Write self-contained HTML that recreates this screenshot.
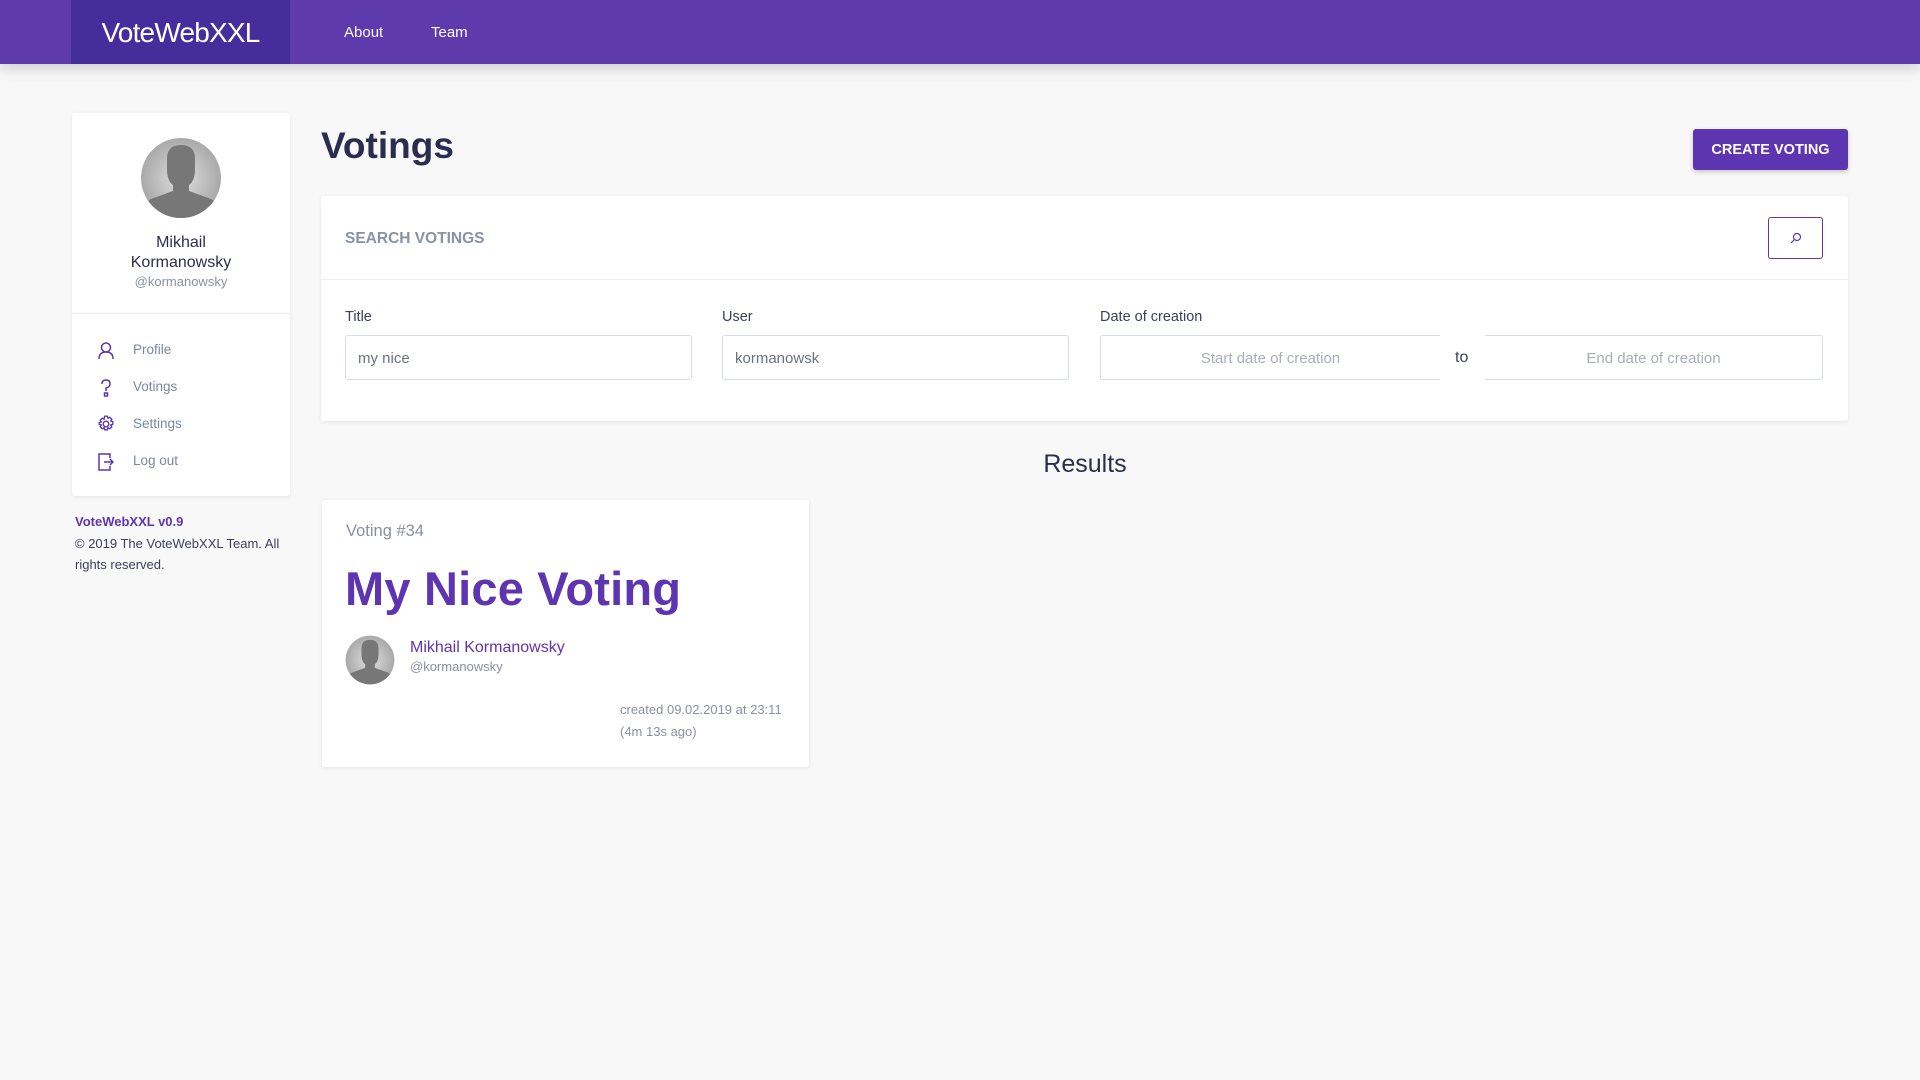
<!DOCTYPE html>
<html><head><meta charset="utf-8"><style>
*{box-sizing:border-box;margin:0;padding:0}
body{width:1920px;height:1080px;background:#f8f8f8;font-family:"Liberation Sans",sans-serif;position:relative;overflow:hidden;color:#2b2d50}
.a{position:absolute;white-space:nowrap}
.nav{position:absolute;left:0;top:0;width:1920px;height:64px;background:#5e3aad;box-shadow:0 4px 14px rgba(0,0,0,.18)}
.brand{position:absolute;left:71px;top:0;width:219px;height:64px;background:#452d9c;color:#fff;font-size:28px;line-height:66px;text-align:center;letter-spacing:-0.8px}
.card{position:absolute;background:#fff;border-radius:3px;box-shadow:0 1px 4px rgba(0,0,0,.08)}
.inp{position:absolute;height:45px;border:1px solid #d6dde6;border-radius:3px;background:#fff;font-size:15px;line-height:45px;color:#6b7186}
.lbl{font-size:14.5px;color:#3d4058}
.mi{font-size:13.5px;color:#7b86a0}
</style></head><body>
<div class="nav"><div class="brand">VoteWebXXL</div>
<div class="a" style="left:344px;top:24px;color:#fff;font-size:15px">About</div>
<div class="a" style="left:431px;top:24px;color:#fff;font-size:15px">Team</div></div>

<div class="card" style="left:72px;top:113px;width:218px;height:383px">
<svg style="position:absolute;left:68px;top:24px" width="82" height="82" viewBox="0 0 82 82"><defs><radialGradient id="g" cx=".5" cy=".5" r=".5"><stop offset="0" stop-color="#e0e0e0"/><stop offset="1" stop-color="#a9a9a9"/></radialGradient><clipPath id="c"><circle cx="41" cy="41" r="40"/></clipPath></defs><circle cx="41" cy="41" r="40" fill="url(#g)"/><g clip-path="url(#c)" fill="#777"><path d="M27 22q0-14 14-14q14 0 14 14v10q0 12-6 16v6l22 8q8 4 8 20H3q0-16 8-20l22-8v-6q-6-4-6-16z"/></g></svg>
<div class="a" style="left:0;width:218px;text-align:center;top:120px;font-size:16px;color:#2b2d50;line-height:20px;white-space:normal">Mikhail<br>Kormanowsky</div>
<div class="a" style="left:0;width:218px;text-align:center;top:161px;font-size:13px;color:#8a8fa3">@kormanowsky</div>
<div style="position:absolute;left:0;top:200px;width:218px;border-top:1px solid #ececf0"></div>
<svg style="position:absolute;left:26px;top:229px" width="16" height="18" viewBox="0 0 16 18" fill="none" stroke="#5e35b1" stroke-width="1.5"><circle cx="8" cy="5.5" r="4.5"/><path d="M1 17q0-7 7-7t7 7"/></svg>
<div class="a mi" style="left:61px;top:229px">Profile</div>
<svg style="position:absolute;left:27px;top:266px" width="14" height="18" viewBox="0 0 14 18" fill="none" stroke="#5e35b1" stroke-width="1.5"><path d="M3 5q0-4 4-4t4 4q0 3-4 4v3"/><rect x="5.5" y="14" width="3" height="3"/></svg>
<div class="a mi" style="left:61px;top:266px">Votings</div>
<svg style="position:absolute;left:25px;top:302px" width="18" height="18" viewBox="0 0 18 18" fill="none" stroke="#5e35b1" stroke-width="1.4" stroke-linejoin="round"><circle cx="9" cy="9" r="2.8"/><path d="M7.6 1.2h2.8l.5 2.1 1.9-1.1 2 2-1.1 1.9 2.1.5v2.8l-2.1.5 1.1 1.9-2 2-1.9-1.1-.5 2.1H7.6l-.5-2.1-1.9 1.1-2-2 1.1-1.9-2.1-.5V7.6l2.1-.5-1.1-1.9 2-2 1.9 1.1z"/></svg>
<div class="a mi" style="left:61px;top:303px">Settings</div>
<svg style="position:absolute;left:26px;top:340px" width="16" height="18" viewBox="0 0 16 18" fill="none" stroke="#5e35b1" stroke-width="1.5"><path d="M12 5V1H1v16h11v-4"/><path d="M6 9h9M12 6l3 3-3 3"/></svg>
<div class="a mi" style="left:61px;top:340px">Log out</div>
</div>
<div class="a" style="left:75px;top:514px;font-size:13px;font-weight:bold;color:#5e35b1">VoteWebXXL v0.9</div>
<div class="a" style="left:75px;top:533px;font-size:13px;color:#3d4058;line-height:21px;white-space:normal;width:220px">© 2019 The VoteWebXXL Team. All rights reserved.</div>

<div class="a" style="left:321px;top:125px;font-size:37px;font-weight:bold;color:#2b2d50">Votings</div>
<div class="a" style="left:1693px;top:129px;width:155px;height:41px;background:#5e35b1;border-radius:3px;color:#fff;font-weight:bold;font-size:14.5px;text-align:center;line-height:43px;box-shadow:0 2px 5px rgba(0,0,0,.2)">CREATE VOTING</div>

<div class="card" style="left:321px;top:196px;width:1527px;height:225px">
<div class="a" style="left:24px;top:34px;font-size:15.5px;font-weight:bold;color:#8892a6">SEARCH VOTINGS</div>
<div style="position:absolute;left:1447px;top:21px;width:55px;height:42px;border:1px solid #5e35b1;border-radius:3px"><svg style="position:absolute;left:20px;top:13px" width="14" height="14" viewBox="0 0 14 14" fill="none" stroke="#5e35b1" stroke-width="1.2"><circle cx="8" cy="6" r="3.5"/><path d="M5.5 8.5 2 12"/></svg></div>
<div style="position:absolute;left:0;top:83px;width:1527px;border-top:1px solid #efeff2"></div>
<div class="a lbl" style="left:24px;top:113px">Title</div>
<div class="a lbl" style="left:401px;top:113px">User</div>
<div class="a lbl" style="left:779px;top:113px">Date of creation</div>
<div class="inp" style="left:24px;top:139px;width:347px;padding-left:12px">my nice</div>
<div class="inp" style="left:401px;top:139px;width:347px;padding-left:12px">kormanowsk</div>
<div class="inp" style="left:779px;top:139px;width:340px;text-align:center;color:#a9aeb9;border-right:none;border-radius:3px 0 0 3px">Start date of creation</div>
<div class="a" style="left:1134px;top:153px;font-size:16px;color:#3d4058">to</div>
<div class="inp" style="left:1164px;top:139px;width:338px;text-align:center;color:#a9aeb9;border-left:none;border-radius:0 3px 3px 0">End date of creation</div>
</div>

<div class="a" style="left:0;width:2170px;text-align:center;top:450px;font-size:25px;color:#2b2d50">Results</div>

<div class="card" style="left:322px;top:500px;width:487px;height:267px">
<div class="a" style="left:24px;top:22px;font-size:16.5px;color:#8a8fa3">Voting #34</div>
<div class="a" style="left:23px;top:61px;font-size:47px;font-weight:bold;color:#5e35b1;letter-spacing:0.2px">My Nice Voting</div>
<svg style="position:absolute;left:23px;top:135px" width="50" height="50" viewBox="0 0 82 82"><defs><radialGradient id="g2" cx=".5" cy=".5" r=".5"><stop offset="0" stop-color="#e0e0e0"/><stop offset="1" stop-color="#a9a9a9"/></radialGradient><clipPath id="c2"><circle cx="41" cy="41" r="40"/></clipPath></defs><circle cx="41" cy="41" r="40" fill="url(#g2)"/><g clip-path="url(#c2)" fill="#777"><path d="M27 22q0-14 14-14q14 0 14 14v10q0 12-6 16v6l22 8q8 4 8 20H3q0-16 8-20l22-8v-6q-6-4-6-16z"/></g></svg>
<div class="a" style="left:88px;top:139px;font-size:16px;color:#5e35b1">Mikhail Kormanowsky</div>
<div class="a" style="left:88px;top:159px;font-size:13px;color:#8a8fa3">@kormanowsky</div>
<div class="a" style="left:298px;top:199px;font-size:13px;color:#8a8fa3;line-height:22px">created 09.02.2019 at 23:11<br>(4m 13s ago)</div>
</div>
</body></html>
